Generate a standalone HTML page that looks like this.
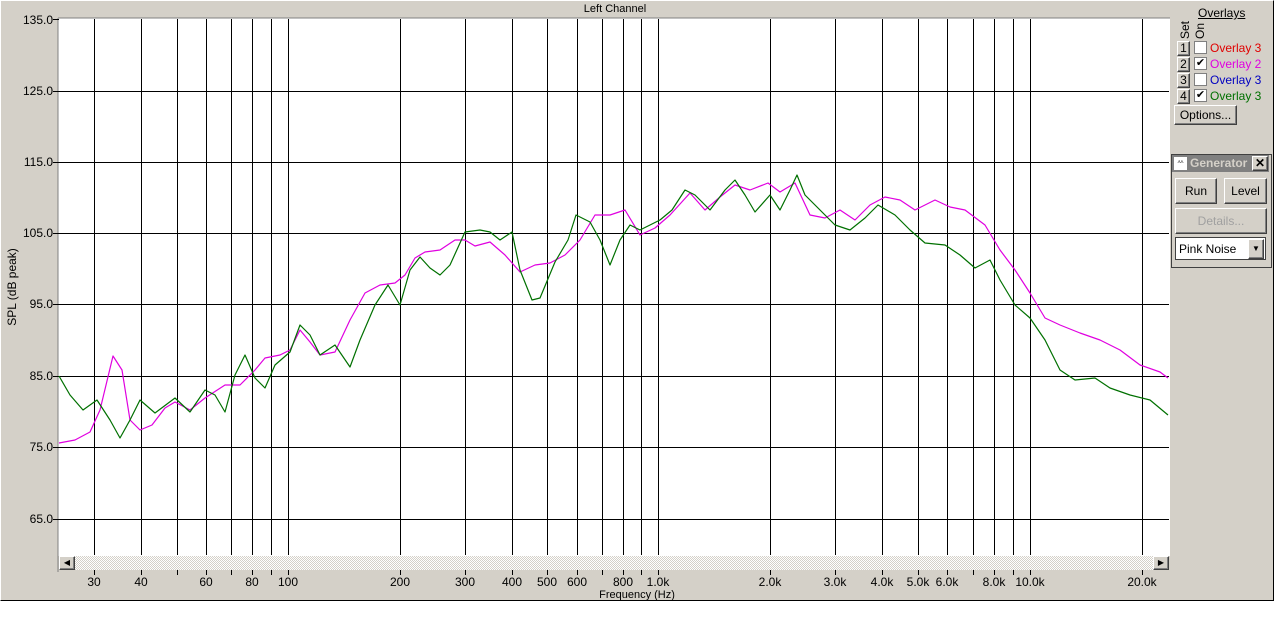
<!DOCTYPE html><html><head><style>
body{margin:0;width:1274px;height:637px;background:#fff;font-family:"Liberation Sans",sans-serif;font-size:11px;position:relative;overflow:hidden}
.p{position:absolute}
.btn{position:absolute;background:#d4d0c8;border:1px solid;border-color:#fff #404040 #404040 #fff;box-shadow:inset -1px -1px #808080;text-align:center;font-size:12px}
</style></head><body>
<div class="p" style="left:0;top:0;width:1272px;height:599px;background:#d4d0c8;border:1px solid #000;border-top:1px solid #fff;border-left:1px solid #fff"></div>
<div class="p" style="left:0;top:3px;width:1170px;text-align:center;left:30px;font-size:11px">Left Channel</div>
<svg class="p" style="left:0;top:0" width="1274" height="637">
<g font-size="12" text-anchor="end" fill="#000">
<text x="53" y="24">135.0</text><text x="53" y="95">125.0</text><text x="53" y="166">115.0</text><text x="53" y="237">105.0</text><text x="53" y="308">95.0</text><text x="53" y="380">85.0</text><text x="53" y="451">75.0</text><text x="53" y="523">65.0</text>
</g>
<text transform="translate(16,287) rotate(-90)" text-anchor="middle" font-size="12">SPL (dB peak)</text>
<rect x="58" y="18" width="1112" height="538" fill="#fff"/>
<line x1="58" y1="18" x2="1170" y2="18" stroke="#808080"/><line x1="58" y1="18" x2="58" y2="572" stroke="#808080"/>
<g stroke="#000" stroke-width="1">
<path d="M59 91.5H1169M59 162.5H1169M59 233.5H1169M59 304.5H1169M59 376.5H1169M59 447.5H1169M59 519.5H1169M53 19.5H59M53 91.5H59M53 162.5H59M53 233.5H59M53 304.5H59M53 376.5H59M53 447.5H59M53 519.5H59"/>
<path d="M94.5 19V555M141.5 19V555M177.5 19V555M206.5 19V555M231.5 19V555M252.5 19V555M271.5 19V555M288.5 19V555M400.5 19V555M465.5 19V555M512.5 19V555M547.5 19V555M577.5 19V555M602.5 19V555M623.5 19V555M641.5 19V555M658.5 19V555M770.5 19V555M835.5 19V555M882.5 19V555M918.5 19V555M947.5 19V555M973.5 19V555M994.5 19V555M1013.5 19V555M1030.5 19V555M1142.5 19V555"/>
<path d="M94.5 570V575M141.5 570V575M177.5 570V575M206.5 570V575M231.5 570V575M252.5 570V575M271.5 570V575M288.5 570V575M400.5 570V575M465.5 570V575M512.5 570V575M547.5 570V575M577.5 570V575M602.5 570V575M623.5 570V575M641.5 570V575M658.5 570V575M770.5 570V575M835.5 570V575M882.5 570V575M918.5 570V575M947.5 570V575M973.5 570V575M994.5 570V575M1013.5 570V575M1030.5 570V575M1142.5 570V575"/>
</g>
<polyline fill="none" stroke="#e000e0" stroke-width="1.2" stroke-linejoin="round" points="59,443 75,440 90,432 100,410 113,356 122,370 130,420 140,430 152,425 165,408 175,402 190,410 205,398 225,385 240,385 255,370 265,358 280,355 290,350 300,330 310,342 320,355 335,352 350,320 365,293 380,285 395,283 405,275 415,258 425,252 440,250 455,240 465,240 475,246 490,242 505,255 520,272 535,265 550,263 565,255 580,240 595,215 610,215 625,210 640,235 655,228 670,215 690,193 705,210 720,197 735,185 750,190 768,183 780,192 795,183 810,215 825,218 840,210 855,220 870,205 885,197 900,200 915,210 935,200 950,207 965,210 985,225 1000,250 1015,270 1030,293 1045,318 1060,325 1080,333 1100,340 1120,350 1140,365 1160,372 1168,378"/>
<polyline fill="none" stroke="#007000" stroke-width="1.2" stroke-linejoin="round" points="59,376 70,395 83,410 97,400 110,420 120,438 130,420 140,400 155,413 175,398 190,412 205,390 215,395 225,412 235,375 245,355 255,378 265,388 275,365 290,352 300,325 310,335 320,355 335,345 350,367 360,340 375,305 388,285 400,305 410,270 420,257 430,268 440,275 450,265 465,232 480,230 490,232 500,240 512,232 520,270 532,300 540,298 555,262 568,240 576,215 590,222 600,240 610,265 620,240 630,225 640,230 660,220 672,210 685,190 695,195 710,210 725,190 735,180 745,195 755,212 770,195 780,210 790,190 797,175 805,195 820,210 835,225 850,230 865,218 878,205 895,215 910,230 925,243 945,245 960,255 975,268 990,260 1000,280 1015,305 1030,318 1045,340 1060,370 1075,380 1095,378 1110,388 1130,395 1150,400 1168,415"/>
<defs><pattern id="dt" width="2" height="2" patternUnits="userSpaceOnUse"><rect width="2" height="2" fill="#fff"/><rect width="1" height="1" fill="#d4d0c8"/><rect x="1" y="1" width="1" height="1" fill="#d4d0c8"/></pattern></defs>
<rect x="59" y="556" width="1110" height="14" fill="url(#dt)"/>
<g font-size="12" text-anchor="middle">
<text x="94" y="586">30</text><text x="141" y="586">40</text><text x="206" y="586">60</text><text x="252" y="586">80</text><text x="288" y="586">100</text><text x="400" y="586">200</text><text x="465" y="586">300</text><text x="512" y="586">400</text><text x="547" y="586">500</text><text x="577" y="586">600</text><text x="623" y="586">800</text><text x="658" y="586">1.0k</text><text x="770" y="586">2.0k</text><text x="835" y="586">3.0k</text><text x="882" y="586">4.0k</text><text x="918" y="586">5.0k</text><text x="947" y="586">6.0k</text><text x="994" y="586">8.0k</text><text x="1030" y="586">10.0k</text><text x="1142" y="586">20.0k</text>
<text x="637" y="598" font-size="11">Frequency (Hz)</text>
</g>
</svg>
<div class="btn" style="left:59px;top:556px;width:14px;height:12px;font-size:8px;line-height:12px">◀</div>
<div class="btn" style="left:1153px;top:556px;width:14px;height:12px;font-size:8px;line-height:12px">▶</div>
<div class="p" style="left:1198px;top:6px;font-size:12px;text-decoration:underline">Overlays</div>
<div class="p" style="left:1178px;top:39px;transform:rotate(-90deg);transform-origin:0 0;font-size:12px">Set</div>
<div class="p" style="left:1193px;top:39px;transform:rotate(-90deg);transform-origin:0 0;font-size:12px">On</div>
<div class="btn" style="left:1177px;top:41px;width:11px;height:13px;line-height:13px">1</div>
<div class="btn" style="left:1177px;top:57px;width:11px;height:13px;line-height:13px">2</div>
<div class="btn" style="left:1177px;top:73px;width:11px;height:13px;line-height:13px">3</div>
<div class="btn" style="left:1177px;top:89px;width:11px;height:13px;line-height:13px">4</div>
<div class="p" style="left:1194px;top:41px;width:11px;height:11px;background:#fff;border:1px solid #808080"></div>
<div class="p" style="left:1194px;top:57px;width:11px;height:11px;background:#fff;border:1px solid #808080;font-size:11px;line-height:11px;text-align:center">✔</div>
<div class="p" style="left:1194px;top:73px;width:11px;height:11px;background:#fff;border:1px solid #808080"></div>
<div class="p" style="left:1194px;top:89px;width:11px;height:11px;background:#fff;border:1px solid #808080;font-size:11px;line-height:11px;text-align:center">✔</div>
<div class="p" style="left:1210px;top:41px;color:#e00000;font-size:12px">Overlay 3</div>
<div class="p" style="left:1210px;top:57px;color:#e000e0;font-size:12px">Overlay 2</div>
<div class="p" style="left:1210px;top:73px;color:#0000c0;font-size:12px">Overlay 3</div>
<div class="p" style="left:1210px;top:89px;color:#007000;font-size:12px">Overlay 3</div>
<div class="btn" style="left:1174px;top:105px;width:61px;height:18px;line-height:18px">Options...</div>
<div class="p" style="left:1171px;top:154px;width:99px;height:112px;border:1px solid #404040;background:#d4d0c8"></div>
<div class="p" style="left:1172px;top:155px;width:97px;height:17px;background:#808080"></div>
<div class="p" style="left:1174px;top:157px;width:13px;height:13px;background:#fff;font-size:8px;line-height:13px;text-align:center;color:#555">ᄊ</div>
<div class="p" style="left:1190px;top:156px;color:#d4d0c8;font-weight:bold;font-size:12px">Generator</div>
<div class="btn" style="left:1252px;top:156px;width:14px;height:13px;line-height:13px;font-weight:bold">✕</div>
<div class="btn" style="left:1175px;top:178px;width:40px;height:24px;line-height:24px">Run</div>
<div class="btn" style="left:1224px;top:178px;width:41px;height:24px;line-height:24px">Level</div>
<div class="btn" style="left:1175px;top:208px;width:90px;height:24px;line-height:24px;color:#a0a0a0">Details...</div>
<div class="p" style="left:1175px;top:237px;width:89px;height:23px;background:#fff;border:1px solid #404040;line-height:23px;font-size:12px;padding-left:3px;box-sizing:border-box;width:91px">Pink Noise</div>
<div class="btn" style="left:1248px;top:239px;width:14px;height:18px;line-height:18px;font-size:8px">▼</div>
</body></html>
